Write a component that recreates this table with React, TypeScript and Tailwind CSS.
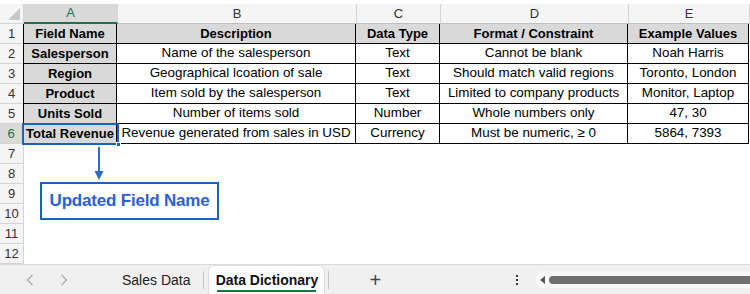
import React from "react";

const cols = [
  { key: "A", w: "w-[94px]" },
  { key: "B", w: "w-[239px]" },
  { key: "C", w: "w-[84px]" },
  { key: "D", w: "w-[188px]" },
  { key: "E", w: "w-[121px]" },
];

const data: string[][] = [
  ["Field Name", "Description", "Data Type", "Format / Constraint", "Example Values"],
  ["Salesperson", "Name of the salesperson", "Text", "Cannot be blank", "Noah Harris"],
  ["Region", "Geographical lcoation of sale", "Text", "Should match valid regions", "Toronto, London"],
  ["Product", "Item sold by the salesperson", "Text", "Limited to company products", "Monitor, Laptop"],
  ["Units Sold", "Number of items sold", "Number", "Whole numbers only", "47, 30"],
  ["Total Revenue", "Revenue generated from sales in USD", "Currency", "Must be numeric, ≥ 0", "5864, 7393"],
];

function RowHeader({ n, selected }: { n: number; selected?: boolean }) {
  return (
    <div
      className={
        "w-[24px] h-[20px] shrink-0 flex items-center justify-center border-r border-b border-[#d4d4d4] text-[13px] " +
        (selected ? "bg-[#d9d9d9] text-[#1e7145] border-r-[#1e7145] border-r-2" : "bg-[#f5f5f5] text-[#333]")
      }
    >
      {n}
    </div>
  );
}

export default function App() {
  return (
    <div
      className="relative w-[750px] h-[294px] bg-white overflow-hidden"
      style={{ fontFamily: '"Liberation Sans", Arial, sans-serif' }}
    >
      <div className="h-[4px] bg-white" />
      {/* column header */}
      <div className="flex h-[20px]">
        <div className="relative w-[24px] shrink-0 bg-[#f5f5f5] border-r border-b border-[#d4d4d4]">
          <div className="absolute right-[3px] bottom-[3px] w-0 h-0 border-l-[12px] border-l-transparent border-b-[12px] border-b-[#c8c8c8]" />
        </div>
        {cols.map((c, i) => (
          <div
            key={c.key}
            className={
              c.w +
              " shrink-0 flex items-center justify-center text-[13px] border-r border-[#d4d4d4] " +
              (i === 0
                ? "bg-[#d9d9d9] text-[#1e7145] border-b-2 border-b-[#1e7145]"
                : "bg-[#f5f5f5] text-[#333] border-b border-b-[#bfbfbf]")
            }
          >
            {c.key}
          </div>
        ))}
      </div>
      {/* data rows */}
      {data.map((row, r) => (
        <div key={r} className="flex h-[20px]">
          <RowHeader n={r + 1} selected={r === 5} />
          {row.map((txt, ci) => {
            const bold = r === 0 || ci === 0;
            const grey = r === 0 || ci === 0;
            return (
              <div
                key={ci}
                className={
                  cols[ci].w +
                  " shrink-0 h-[20px] flex items-center justify-center whitespace-nowrap overflow-hidden text-black border-r border-b border-black " +
                  (ci === 0 ? "border-l border-l-black -ml-px " : "") +
                  (bold ? "font-bold text-[13px] " : "text-[13.4px] ") +
                  (grey ? "bg-[#d9d9d9]" : "bg-white")
                }
              >
                {txt}
              </div>
            );
          })}
        </div>
      ))}
      {/* empty rows */}
      {[7, 8, 9, 10, 11, 12].map((n) => (
        <div key={n} className="flex h-[20px]">
          <RowHeader n={n} />
          {cols.map((c) => (
            <div key={c.key} className={c.w + " shrink-0 h-[20px] bg-white"} />
          ))}
        </div>
      ))}

      {/* sheet tabs bar */}
      <div className="absolute left-0 top-[264px] w-[750px] h-[30px] bg-[#f0f0f0] border-t border-[#dadada] flex items-center text-[14px]">
        <div className="w-[60px] flex items-center justify-between pl-[26px] pr-0">
          <svg width="8" height="12" viewBox="0 0 8 12"><path d="M6.5 1 L1.5 6 L6.5 11" stroke="#a8a8a8" strokeWidth="1.2" fill="none" /></svg>
        </div>
        <div className="w-[20px] flex items-center">
          <svg width="8" height="12" viewBox="0 0 8 12"><path d="M1.5 1 L6.5 6 L1.5 11" stroke="#a8a8a8" strokeWidth="1.2" fill="none" /></svg>
        </div>
        <div className="ml-[42px] text-[#222] pt-[2px]">Sales Data</div>
        <div className="ml-[13px] w-px h-[18px] bg-[#c4c4c4]" />
        <div className="ml-[4px] self-end h-[29px] w-[117px] bg-white rounded-t-[6px] border border-b-0 border-[#dcdcdc] flex flex-col items-center justify-center">
          <div className="text-[#111] font-semibold pt-[3px] leading-[18px]">Data Dictionary</div>
          <div className="w-[99px] h-[2px] bg-[#127a3f] mt-[1px]" />
        </div>
        <div className="ml-[3px] w-px h-[18px] bg-[#c4c4c4]" />
        <div className="ml-[40px] text-[#444] text-[20px] leading-none font-light">+</div>
        <div className="ml-[135px] flex flex-col gap-[2px] items-center">
          <div className="w-[2px] h-[2px] bg-[#333]" />
          <div className="w-[2px] h-[2px] bg-[#333]" />
          <div className="w-[2px] h-[2px] bg-[#333]" />
        </div>
        <div className="ml-[17px] h-[17px] flex-1 bg-[#f8f8f8] rounded-l-[9px] flex items-center pl-[5px]">
          <div className="w-0 h-0 border-t-[4px] border-t-transparent border-b-[4px] border-b-transparent border-r-[5px] border-r-[#555]" />
          <div className="ml-[4px] flex-1 h-[8px] bg-[#707070] rounded-l-[4px]" />
        </div>
      </div>

      {/* selection on A6 */}
      <div className="absolute left-[22px] top-[123px] w-[97px] h-[22px] border-2 border-[#1565c0]" />
      <div className="absolute left-[116px] top-[142px] w-[5px] h-[5px] bg-[#1565c0] border border-white" />

      {/* arrow */}
      <div className="absolute left-[98px] top-[147px] w-[2px] h-[26px] bg-[#2a6fcf]" />
      <svg className="absolute left-[94px] top-[171px]" width="10" height="10" viewBox="0 0 10 10">
        <path d="M0.5 0 L9.5 0 L5 9 Z" fill="#2a6fcf" />
      </svg>

      {/* callout */}
      <div className="absolute left-[40px] top-[182px] w-[179px] h-[38px] border-2 border-[#1565c0] bg-white flex items-center justify-center">
        <span className="text-[#2b5fd4] font-bold text-[17px] tracking-[-0.2px]">Updated Field Name</span>
      </div>
    </div>
  );
}
